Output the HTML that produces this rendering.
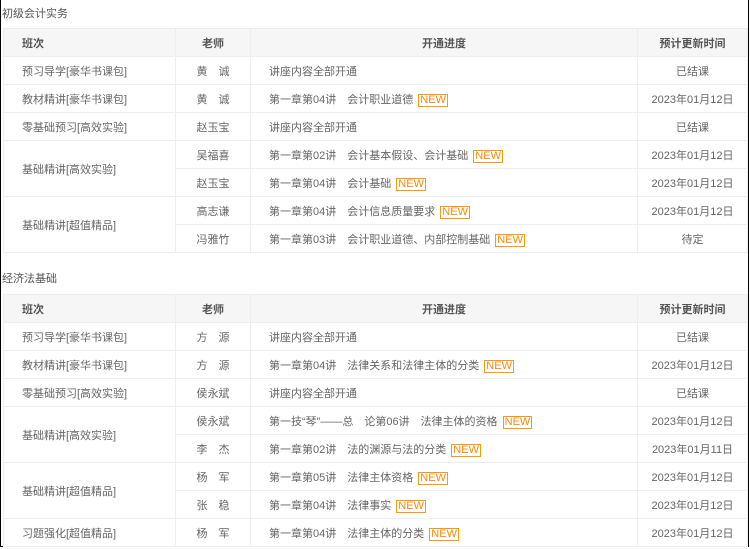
<!DOCTYPE html>
<html><head><meta charset="utf-8"><style>
html,body{margin:0;padding:0;background:#fff;}
body{width:750px;height:549px;overflow:hidden;position:relative;font-family:"Liberation Sans","Noto Sans CJK SC",sans-serif;font-size:11px;color:#666;}
.frame{position:absolute;left:0;top:0;width:747px;height:546px;border:1px solid #000;border-top:none;}
.title{position:absolute;left:2px;font-size:11px;color:#555;}
table{position:absolute;left:3px;border-collapse:collapse;table-layout:fixed;width:744px;}
td,th{border:1px solid #eee;height:27px;padding:0;font-weight:normal;}
th{background:#f6f6f6;color:#555;font-weight:bold;height:27px;}
th.c1{text-align:left;padding-left:18px;}
td.c1{padding-left:18px;}
.c2{text-align:center;}
td.c3{padding-left:18px;}
.c4{text-align:center;}
.new{display:inline-block;border:1px solid #f90;color:#f80;font-size:11px;line-height:11px;padding:0 1px;margin-left:2px;}
</style></head><body>
<div class="frame"></div>
<div class="title" style="top:5px">初级会计实务</div>
<table style="top:28px">
<colgroup><col style="width:172px"><col style="width:75px"><col style="width:387px"><col style="width:110px"></colgroup>
<tr><th class="c1">班次</th><th class="c2">老师</th><th>开通进度</th><th class="c4">预计更新时间</th></tr>
<tr><td class="c1">预习导学[豪华书课包]</td><td class="c2">黄　诚</td><td class="c3">讲座内容全部开通</td><td class="c4">已结课</td></tr>
<tr><td class="c1">教材精讲[豪华书课包]</td><td class="c2">黄　诚</td><td class="c3">第一章第04讲　会计职业道德 <span class="new">NEW</span></td><td class="c4">2023年01月12日</td></tr>
<tr><td class="c1">零基础预习[高效实验]</td><td class="c2">赵玉宝</td><td class="c3">讲座内容全部开通</td><td class="c4">已结课</td></tr>
<tr><td class="c1" rowspan="2">基础精讲[高效实验]</td><td class="c2">吴福喜</td><td class="c3">第一章第02讲　会计基本假设、会计基础 <span class="new">NEW</span></td><td class="c4">2023年01月12日</td></tr>
<tr><td class="c2">赵玉宝</td><td class="c3">第一章第04讲　会计基础 <span class="new">NEW</span></td><td class="c4">2023年01月12日</td></tr>
<tr><td class="c1" rowspan="2">基础精讲[超值精品]</td><td class="c2">高志谦</td><td class="c3">第一章第04讲　会计信息质量要求 <span class="new">NEW</span></td><td class="c4">2023年01月12日</td></tr>
<tr><td class="c2">冯雅竹</td><td class="c3">第一章第03讲　会计职业道德、内部控制基础 <span class="new">NEW</span></td><td class="c4">待定</td></tr>
</table>
<div class="title" style="top:270px">经济法基础</div>
<table style="top:294px">
<colgroup><col style="width:172px"><col style="width:75px"><col style="width:387px"><col style="width:110px"></colgroup>
<tr><th class="c1">班次</th><th class="c2">老师</th><th>开通进度</th><th class="c4">预计更新时间</th></tr>
<tr><td class="c1">预习导学[豪华书课包]</td><td class="c2">方　源</td><td class="c3">讲座内容全部开通</td><td class="c4">已结课</td></tr>
<tr><td class="c1">教材精讲[豪华书课包]</td><td class="c2">方　源</td><td class="c3">第一章第04讲　法律关系和法律主体的分类 <span class="new">NEW</span></td><td class="c4">2023年01月12日</td></tr>
<tr><td class="c1">零基础预习[高效实验]</td><td class="c2">侯永斌</td><td class="c3">讲座内容全部开通</td><td class="c4">已结课</td></tr>
<tr><td class="c1" rowspan="2">基础精讲[高效实验]</td><td class="c2">侯永斌</td><td class="c3">第一技“琴”——总　论第06讲　法律主体的资格 <span class="new">NEW</span></td><td class="c4">2023年01月12日</td></tr>
<tr><td class="c2">李　杰</td><td class="c3">第一章第02讲　法的渊源与法的分类 <span class="new">NEW</span></td><td class="c4">2023年01月11日</td></tr>
<tr><td class="c1" rowspan="2">基础精讲[超值精品]</td><td class="c2">杨　军</td><td class="c3">第一章第05讲　法律主体资格 <span class="new">NEW</span></td><td class="c4">2023年01月12日</td></tr>
<tr><td class="c2">张　稳</td><td class="c3">第一章第04讲　法律事实 <span class="new">NEW</span></td><td class="c4">2023年01月12日</td></tr>
<tr><td class="c1">习题强化[超值精品]</td><td class="c2">杨　军</td><td class="c3">第一章第04讲　法律主体的分类 <span class="new">NEW</span></td><td class="c4">2023年01月12日</td></tr>
</table>
</body></html>
